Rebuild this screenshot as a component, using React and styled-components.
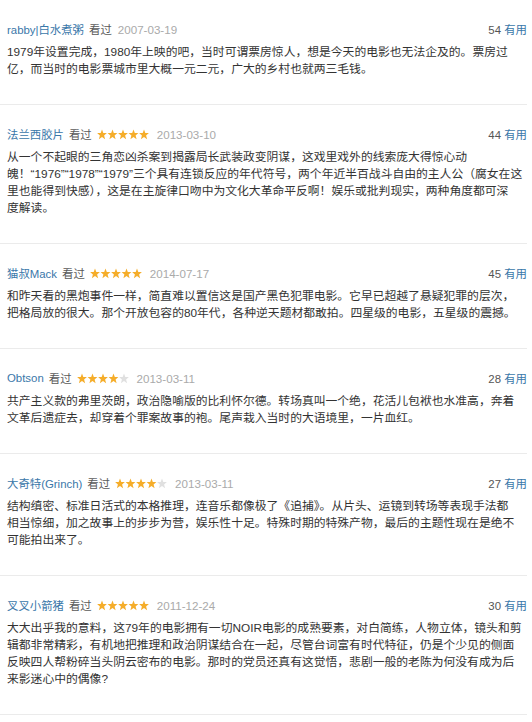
import React from "react";
import styled, { createGlobalStyle } from "styled-components";

const reviews = [
  {
    name: "rabby|白水煮粥",
    stars: 0,
    date: "2007-03-19",
    votes: 54,
    lines: [
      "1979年设置完成，1980年上映的吧，当时可谓票房惊人，想是今天的电影也无法企及的。票房过",
      "亿，而当时的电影票城市里大概一元二元，广大的乡村也就两三毛钱。",
    ],
  },
  {
    name: "法兰西胶片",
    stars: 5,
    date: "2013-03-10",
    votes: 44,
    lines: [
      "从一个不起眼的三角恋凶杀案到揭露局长武装政变阴谋，这戏里戏外的线索庞大得惊心动",
      "魄！“1976”“1978”“1979”三个具有连锁反应的年代符号，两个年近半百战斗自由的主人公（腐女在这",
      "里也能得到快感），这是在主旋律口吻中为文化大革命平反啊！娱乐或批判现实，两种角度都可深",
      "度解读。",
    ],
  },
  {
    name: "猫叔Mack",
    stars: 5,
    date: "2014-07-17",
    votes: 45,
    lines: [
      "和昨天看的黑炮事件一样，简直难以置信这是国产黑色犯罪电影。它早已超越了悬疑犯罪的层次，",
      "把格局放的很大。那个开放包容的80年代，各种逆天题材都敢拍。四星级的电影，五星级的震撼。",
    ],
  },
  {
    name: "Obtson",
    stars: 4,
    date: "2013-03-11",
    votes: 28,
    lines: [
      "共产主义款的弗里茨朗，政治隐喻版的比利怀尔德。转场真叫一个绝，花活儿包袱也水准高，奔着",
      "文革后遗症去，却穿着个罪案故事的袍。尾声栽入当时的大语境里，一片血红。",
    ],
  },
  {
    name: "大奇特(Grinch)",
    stars: 4,
    date: "2013-03-11",
    votes: 27,
    lines: [
      "结构缜密、标准日活式的本格推理，连音乐都像极了《追捕》。从片头、运镜到转场等表现手法都",
      "相当惊细，加之故事上的步步为营，娱乐性十足。特殊时期的特殊产物，最后的主题性现在是绝不",
      "可能拍出来了。",
    ],
  },
  {
    name: "叉叉小箭猪",
    stars: 5,
    date: "2011-12-24",
    votes: 30,
    lines: [
      "大大出乎我的意料，这79年的电影拥有一切NOIR电影的成熟要素，对白简练，人物立体，镜头和剪",
      "辑都非常精彩，有机地把推理和政治阴谋结合在一起，尽管台词富有时代特征，仍是个少见的侧面",
      "反映四人帮粉碎当头阴云密布的电影。那时的党员还真有这觉悟，悲剧一般的老陈为何没有成为后",
      "来影迷心中的偶像?",
    ],
  },
];

// chubby five-point star in a 10x10 box
const STAR =
  "5,0 6.3,3.4 9.9,3.5 7.1,5.8 8.1,9.6 5,7.5 1.9,9.6 2.9,5.8 0.1,3.5 3.7,3.4";

function Stars({ count }) {
  return (
    <StarSvg width="52" height="11" viewBox="0 0 52 11">
      {[0, 1, 2, 3, 4].map((i) => (
        <polygon
          key={i}
          points={STAR}
          transform={`translate(${i * 10.5} 0.6)`}
          fill={i < count ? "#f5ad2a" : "#e0e0e0"}
        />
      ))}
    </StarSvg>
  );
}

function App() {
  return (
    <Page>
      <GlobalStyle />
      {reviews.map((r) => (
        <Review key={r.name}>
          <Header>
            <Meta>
              <Name>{r.name}</Name>
              <Seen>看过</Seen>
              {r.stars > 0 && <Stars count={r.stars} />}
              <Date>{r.date}</Date>
            </Meta>
            <Votes>
              {r.votes} <Useful>有用</Useful>
            </Votes>
          </Header>
          <Body>
            {r.lines.map((l, i) => (
              <Line key={i}>{l}</Line>
            ))}
          </Body>
        </Review>
      ))}
    </Page>
  );
}
export default App;

const GlobalStyle = createGlobalStyle`
  body {
    margin: 0;
    background: #fff;
    font-family: "Liberation Sans", "Noto Sans CJK SC", sans-serif;
  }
`;

const Page = styled.div`
  width: 532px;
  height: 722px;
  overflow: hidden;
  padding-right: 5px;
  box-sizing: border-box;
`;

const Review = styled.div`
  padding: 21px 0 26px 7px;
  border-bottom: 1px solid #ebebeb;
`;

const Header = styled.div`
  display: flex;
  align-items: center;
  justify-content: space-between;
  height: 16px;
  font-size: 11.4px;
`;

const Meta = styled.div`
  display: flex;
  align-items: center;
`;

const Name = styled.span`
  color: #3a77a9;
`;

const Seen = styled.span`
  color: #5a5a5a;
  margin-left: 5px;
`;

const StarSvg = styled.svg`
  display: block;
  margin-left: 5px;
  margin-right: 2px;
`;

const Date = styled.span`
  color: #aaa;
  margin-left: 6px;
  font-size: 11.6px;
`;

const Votes = styled.span`
  color: #555;
`;

const Useful = styled.span`
  color: #3a77a9;
`;

const Body = styled.div`
  margin-top: 7px;
  font-size: 11.8px;
  line-height: 17px;
  color: #333;
`;

const Line = styled.div`
  white-space: nowrap;
`;
